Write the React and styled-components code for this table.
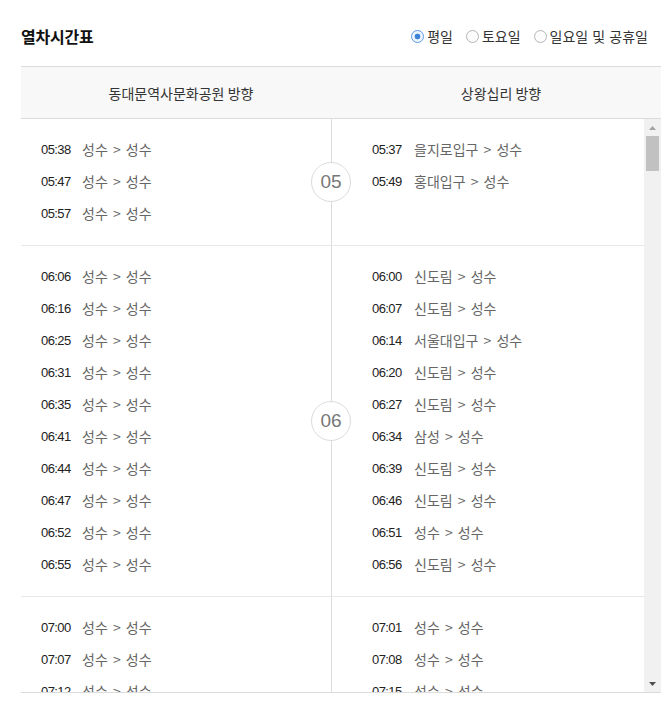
import React from "react";
import styled, { createGlobalStyle } from "styled-components";

const GlobalStyle = createGlobalStyle`
  *, *::before, *::after { box-sizing: border-box; }
  body {
    margin: 0;
    background: #fff;
    font-family: "Liberation Sans", "Noto Sans CJK KR", Arial, sans-serif;
    color: #333;
  }
`;

const Wrapper = styled.div`
  padding: 0 7px 0 21px;
  width: 668px;
`;

const TopBar = styled.div`
  height: 66px;
  padding: 6px 13px 0 0;
  display: flex;
  align-items: center;
  justify-content: space-between;
`;

const Title = styled.h2`
  margin: 0;
  font-family: "Noto Sans CJK KR", sans-serif;
  font-size: 16px;
  font-weight: 700;
  color: #111;
  letter-spacing: -0.2px;
`;

const RadioGroup = styled.div`
  display: flex;
  align-items: center;
  gap: 13px;
`;

const RadioLabel = styled.label`
  display: flex;
  align-items: center;
  gap: 3px;
  font-family: "Noto Sans CJK KR", sans-serif;
  font-size: 14px;
  word-spacing: 1px;
  color: #333;
  line-height: 16px;
  cursor: pointer;
`;

const RadioInput = styled.input`
  appearance: none;
  margin: 0;
  width: 13px;
  height: 13px;
  border-radius: 50%;
  border: 1px solid ${(p) => (p.checked ? "#5b9be6" : "#b5b5b5")};
  background: ${(p) =>
    p.checked ? "radial-gradient(circle, #3c82d8 0 2.6px, #eef5fd 3.2px)" : "#fcfcfc"};
  flex-shrink: 0;
`;

const Table = styled.div`
  width: 640px;
`;

const Head = styled.div`
  display: grid;
  grid-template-columns: 1fr 1fr;
  height: 53px;
  background: #f8f8f8;
  border-top: 1px solid #dcdcdc;
  border-bottom: 1px solid #dcdcdc;
`;

const HeadCell = styled.div`
  display: flex;
  align-items: center;
  justify-content: center;
  font-family: "Noto Sans CJK KR", sans-serif;
  font-size: 14px;
  color: #333;
`;

const Body = styled.div`
  display: flex;
  height: 574px;
  border-bottom: 1px solid #dcdcdc;
`;

const List = styled.div`
  flex: 1;
  min-width: 0;
  overflow: hidden;
`;

const Track = styled.div`
  width: 17px;
  flex-shrink: 0;
  background: #f1f1f1;
  display: flex;
  flex-direction: column;
`;

const ArrowBtn = styled.div`
  height: 17px;
  display: flex;
  align-items: center;
  justify-content: center;
  color: ${(p) => p.$color};
`;

const Thumb = styled.div`
  height: 35px;
  margin: 0 2px;
  background: #c1c1c1;
`;

const TrackSpace = styled.div`
  flex: 1;
`;

const Group = styled.div`
  position: relative;
  display: grid;
  grid-template-columns: 311px 1fr;
  border-bottom: 1px solid #e8e8e8;
`;

const Column = styled.div`
  padding: 14px 0 16px ${(p) => (p.$side === "left" ? "20px" : "40px")};
  border-right: ${(p) => (p.$side === "left" ? "1px solid #dcdcdc" : "0")};
`;

const Row = styled.div`
  display: flex;
  align-items: center;
  height: 32px;
  font-size: 13px;
`;

const Time = styled.span`
  width: ${(p) => (p.$side === "left" ? "41px" : "42px")};
  flex-shrink: 0;
  color: #222;
  letter-spacing: -0.6px;
  font-family: "Liberation Sans", Arial, sans-serif;
`;

const Station = styled.span`
  color: #666;
  font-family: "Noto Sans CJK KR", sans-serif;
  font-size: 14px;
  word-spacing: 2px;
`;

const HourBadge = styled.div`
  position: absolute;
  left: 290px;
  top: 50%;
  transform: translateY(-50%);
  width: 40px;
  height: 40px;
  border-radius: 50%;
  border: 1px solid #dcdcdc;
  background: #fff;
  display: flex;
  align-items: center;
  justify-content: center;
  font-family: "Liberation Sans", Arial, sans-serif;
  font-size: 19px;
  color: #777;
`;

const SS = "성수 > 성수";

const groups = [
  {
    hour: "05",
    left: [
      ["05:38", SS],
      ["05:47", SS],
      ["05:57", SS],
    ],
    right: [
      ["05:37", "을지로입구 > 성수"],
      ["05:49", "홍대입구 > 성수"],
    ],
  },
  {
    hour: "06",
    left: ["06:06", "06:16", "06:25", "06:31", "06:35", "06:41", "06:44", "06:47", "06:52", "06:55"].map(
      (t) => [t, SS]
    ),
    right: [
      ["06:00", "신도림 > 성수"],
      ["06:07", "신도림 > 성수"],
      ["06:14", "서울대입구 > 성수"],
      ["06:20", "신도림 > 성수"],
      ["06:27", "신도림 > 성수"],
      ["06:34", "삼성 > 성수"],
      ["06:39", "신도림 > 성수"],
      ["06:46", "신도림 > 성수"],
      ["06:51", "성수 > 성수"],
      ["06:56", "신도림 > 성수"],
    ],
  },
  {
    hour: "07",
    left: ["07:00", "07:07", "07:12", "07:17", "07:22", "07:27", "07:32", "07:37", "07:42", "07:47", "07:52", "07:57"].map(
      (t) => [t, SS]
    ),
    right: [
      ["07:01", SS],
      ["07:08", SS],
      ["07:15", SS],
      ["07:20", "신도림 > 성수"],
      ["07:25", "신도림 > 성수"],
      ["07:30", SS],
      ["07:35", "신도림 > 성수"],
      ["07:40", "신도림 > 성수"],
      ["07:45", SS],
      ["07:50", "신도림 > 성수"],
      ["07:55", "신도림 > 성수"],
    ],
  },
];

const TimeList = ({ side, items }) => (
  <Column $side={side}>
    {items.map(([t, s]) => (
      <Row key={t}>
        <Time $side={side}>{t}</Time>
        <Station>{s}</Station>
      </Row>
    ))}
  </Column>
);

const Arrow = ({ dir, color }) => (
  <ArrowBtn $color={color}>
    <svg width="7" height="4" viewBox="0 0 7 4">
      {dir === "up" ? (
        <path d="M0 4 L3.5 0 L7 4 Z" fill="currentColor" />
      ) : (
        <path d="M0 0 L3.5 4 L7 0 Z" fill="currentColor" />
      )}
    </svg>
  </ArrowBtn>
);

export default function App() {
  const [day, setDay] = React.useState("weekday");
  const options = [
    ["weekday", "평일"],
    ["sat", "토요일"],
    ["sun", "일요일 및 공휴일"],
  ];
  return (
    <>
      <GlobalStyle />
      <Wrapper>
        <TopBar>
          <Title>열차시간표</Title>
          <RadioGroup>
            {options.map(([v, label]) => (
              <RadioLabel key={v}>
                <RadioInput
                  type="radio"
                  name="day"
                  checked={day === v}
                  onChange={() => setDay(v)}
                />
                {label}
              </RadioLabel>
            ))}
          </RadioGroup>
        </TopBar>
        <Table>
          <Head>
            <HeadCell>동대문역사문화공원 방향</HeadCell>
            <HeadCell>상왕십리 방향</HeadCell>
          </Head>
          <Body>
            <List>
              {groups.map((g) => (
                <Group key={g.hour}>
                  <TimeList side="left" items={g.left} />
                  <TimeList side="right" items={g.right} />
                  <HourBadge>{g.hour}</HourBadge>
                </Group>
              ))}
            </List>
            <Track>
              <Arrow dir="up" color="#a3a3a3" />
              <Thumb />
              <TrackSpace />
              <Arrow dir="down" color="#505050" />
            </Track>
          </Body>
        </Table>
      </Wrapper>
    </>
  );
}
